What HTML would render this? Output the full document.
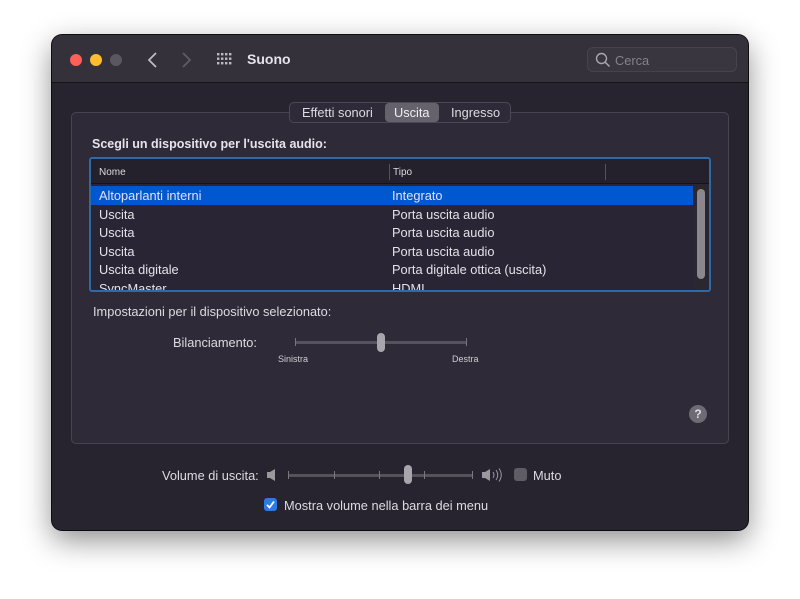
<!DOCTYPE html>
<html><head><meta charset="utf-8"><style>
*{margin:0;padding:0;box-sizing:border-box}
body{width:800px;height:599px;background:#fff;font-family:"Liberation Sans",sans-serif;position:relative;overflow:hidden;color:#e4e2e8}
.win{position:absolute;left:52px;top:35px;width:696px;height:495px;border-radius:10px;background:#28242f;box-shadow:0 10px 30px rgba(0,0,0,.45),0 0 0 1px #111;overflow:hidden}
.tb{position:absolute;left:0;top:0;width:696px;height:48px;background:#34313b;border-bottom:1px solid #151318}
.dot{position:absolute;top:19px;width:12px;height:12px;border-radius:50%}
.abs{position:absolute}
.t{position:absolute;font-size:12.8px;white-space:nowrap}
</style></head><body>
<div class="win">
 <div class="tb">
  <div class="dot" style="left:18px;background:#fe5f57"></div>
  <div class="dot" style="left:38px;background:#febc2e"></div>
  <div class="dot" style="left:58px;background:#5a5760"></div>
  <svg class="abs" style="left:94px;top:16px" width="14" height="18"><path d="M10 2L3 9l7 7" stroke="#bdbac2" stroke-width="1.8" fill="none"/></svg>
  <svg class="abs" style="left:127px;top:16px" width="14" height="18"><path d="M4 2l7 7-7 7" stroke="#5f5c66" stroke-width="1.8" fill="none"/></svg>
  <svg class="abs" style="left:165px;top:18px" width="18" height="14"><g fill="#bdbac2"><rect x="0" y="0" width="2.4" height="2.4"/><rect x="4" y="0" width="2.4" height="2.4"/><rect x="8" y="0" width="2.4" height="2.4"/><rect x="12" y="0" width="2.4" height="2.4"/><rect x="0" y="4.5" width="2.4" height="2.4"/><rect x="4" y="4.5" width="2.4" height="2.4"/><rect x="8" y="4.5" width="2.4" height="2.4"/><rect x="12" y="4.5" width="2.4" height="2.4"/><rect x="0" y="9" width="2.4" height="2.4"/><rect x="4" y="9" width="2.4" height="2.4"/><rect x="8" y="9" width="2.4" height="2.4"/><rect x="12" y="9" width="2.4" height="2.4"/></g></svg>
  <div class="t" style="left:195px;top:16px;font-size:14px;font-weight:bold;color:#e6e4ea">Suono</div>
  <div class="abs" style="left:535px;top:12px;width:150px;height:25px;border:1px solid #46434d;border-radius:6px;background:#393640"></div>
  <svg class="abs" style="left:543px;top:17px" width="16" height="16"><circle cx="6.5" cy="6.5" r="5" stroke="#a9a6ae" stroke-width="1.4" fill="none"/><path d="M10 10l4.5 4.5" stroke="#a9a6ae" stroke-width="1.5"/></svg>
  <div class="t" style="left:563px;top:18px;color:#85828c">Cerca</div>
 </div>
 <div class="abs" style="left:19px;top:77px;width:658px;height:332px;border:1px solid #47434f;border-radius:5px;background:#2e2a37"></div>
 <div class="abs" style="left:237px;top:67px;width:222px;height:21px;border:1px solid #4c4855;border-radius:5px;background:#2e2a37"></div>
 <div class="abs" style="left:333px;top:68px;width:54px;height:19px;border-radius:4px;background:#66626c"></div>
 <div class="t" style="left:250px;top:70px;color:#dddbe1">Effetti sonori</div>
 <div class="t" style="left:342px;top:70px;color:#f0eef2">Uscita</div>
 <div class="t" style="left:399px;top:70px;color:#dddbe1">Ingresso</div>
 <div class="t" style="left:40px;top:102px;font-weight:bold;font-size:12.5px;color:#e6e4ea">Scegli un dispositivo per l'uscita audio:</div>
 <div class="abs" style="left:37px;top:122px;width:622px;height:135px;border:2px solid #2f6aa5;border-radius:3px;background:#2a2535;overflow:hidden">
  <div class="abs" style="left:0;top:0;width:618px;height:25px;background:#24202c;border-bottom:1px solid #15131a"></div>
  <div class="abs" style="left:298px;top:5px;width:1px;height:16px;background:#555"></div>
  <div class="abs" style="left:514px;top:5px;width:1px;height:16px;background:#555"></div>
  <div class="t" style="left:8px;top:8px;font-size:10px;color:#dcdae0">Nome</div>
  <div class="t" style="left:302px;top:8px;font-size:10px;color:#dcdae0">Tipo</div>
  <div class="abs" style="left:0;top:27px;width:602px;height:19px;background:#0058d0"></div>
  <div class="t" style="left:8px;top:29px">Altoparlanti interni</div><div class="t" style="left:301px;top:29px">Integrato</div>
  <div class="t" style="left:8px;top:48px">Uscita</div><div class="t" style="left:301px;top:48px">Porta uscita audio</div>
  <div class="t" style="left:8px;top:66px">Uscita</div><div class="t" style="left:301px;top:66px">Porta uscita audio</div>
  <div class="t" style="left:8px;top:85px">Uscita</div><div class="t" style="left:301px;top:85px">Porta uscita audio</div>
  <div class="t" style="left:8px;top:103px">Uscita digitale</div><div class="t" style="left:301px;top:103px">Porta digitale ottica (uscita)</div>
  <div class="t" style="left:8px;top:122px">SyncMaster</div><div class="t" style="left:301px;top:122px">HDMI</div>
  <div class="abs" style="left:603px;top:27px;width:15px;height:106px;background:#2a2730"></div>
  <div class="abs" style="left:606px;top:30px;width:8px;height:90px;border-radius:4px;background:#8a878f"></div>
 </div>
 <div class="t" style="left:41px;top:269px;color:#dddbe1">Impostazioni per il dispositivo selezionato:</div>
 <div class="t" style="left:121px;top:300px;color:#dddbe1">Bilanciamento:</div>
 <div class="abs" style="left:243px;top:306px;width:172px;height:3px;background:#55525c;border-radius:2px"></div>
 <div class="abs" style="left:243px;top:303px;width:1px;height:8px;background:#7a7780"></div>
 <div class="abs" style="left:414px;top:303px;width:1px;height:8px;background:#7a7780"></div>
 <div class="abs" style="left:325px;top:298px;width:8px;height:19px;border-radius:4px;background:#a8a5ad"></div>
 <div class="t" style="left:226px;top:319px;font-size:9px;color:#cfcdd3">Sinistra</div>
 <div class="t" style="left:400px;top:319px;font-size:9px;color:#cfcdd3">Destra</div>
 <div class="abs" style="left:637px;top:370px;width:18px;height:18px;border-radius:50%;background:#6e6b74;color:#e0dee4;font-size:12px;font-weight:bold;text-align:center;line-height:18px">?</div>
 <div class="t" style="left:110px;top:433px;color:#dddbe1">Volume di uscita:</div>
 <svg class="abs" style="left:214px;top:433px" width="12" height="14"><path d="M1 4h3l5-3v12l-5-3H1z" fill="#9b98a0"/></svg>
 <div class="abs" style="left:236px;top:439px;width:185px;height:3px;background:#55525c;border-radius:2px"></div>
 <div class="abs" style="left:236px;top:436px;width:1px;height:8px;background:#7a7780"></div>
 <div class="abs" style="left:282px;top:436px;width:1px;height:8px;background:#7a7780"></div>
 <div class="abs" style="left:327px;top:436px;width:1px;height:8px;background:#7a7780"></div>
 <div class="abs" style="left:372px;top:436px;width:1px;height:8px;background:#7a7780"></div>
 <div class="abs" style="left:420px;top:436px;width:1px;height:8px;background:#7a7780"></div>
 <div class="abs" style="left:352px;top:430px;width:8px;height:19px;border-radius:4px;background:#a8a5ad"></div>
 <svg class="abs" style="left:429px;top:432px" width="22" height="16"><path d="M1 5h3l5-3v12l-5-3H1z" fill="#9b98a0"/><path d="M12 5q2 3 0 6M15 3q3.5 5 0 10M18 1.5q4.5 6.5 0 13" stroke="#9b98a0" fill="none" stroke-width="1"/></svg>
 <div class="abs" style="left:462px;top:433px;width:13px;height:13px;border-radius:3px;background:#5f5c66"></div>
 <div class="t" style="left:481px;top:433px;color:#dddbe1">Muto</div>
 <div class="abs" style="left:212px;top:463px;width:13px;height:13px;border-radius:3px;background:#2d7ae5"></div>
 <svg class="abs" style="left:212px;top:463px" width="13" height="13"><path d="M3 6.8l2.5 2.7L10 3.5" stroke="#fff" stroke-width="1.8" fill="none"/></svg>
 <div class="t" style="left:232px;top:463px;color:#dddbe1">Mostra volume nella barra dei menu</div>
</div>
</body></html>
